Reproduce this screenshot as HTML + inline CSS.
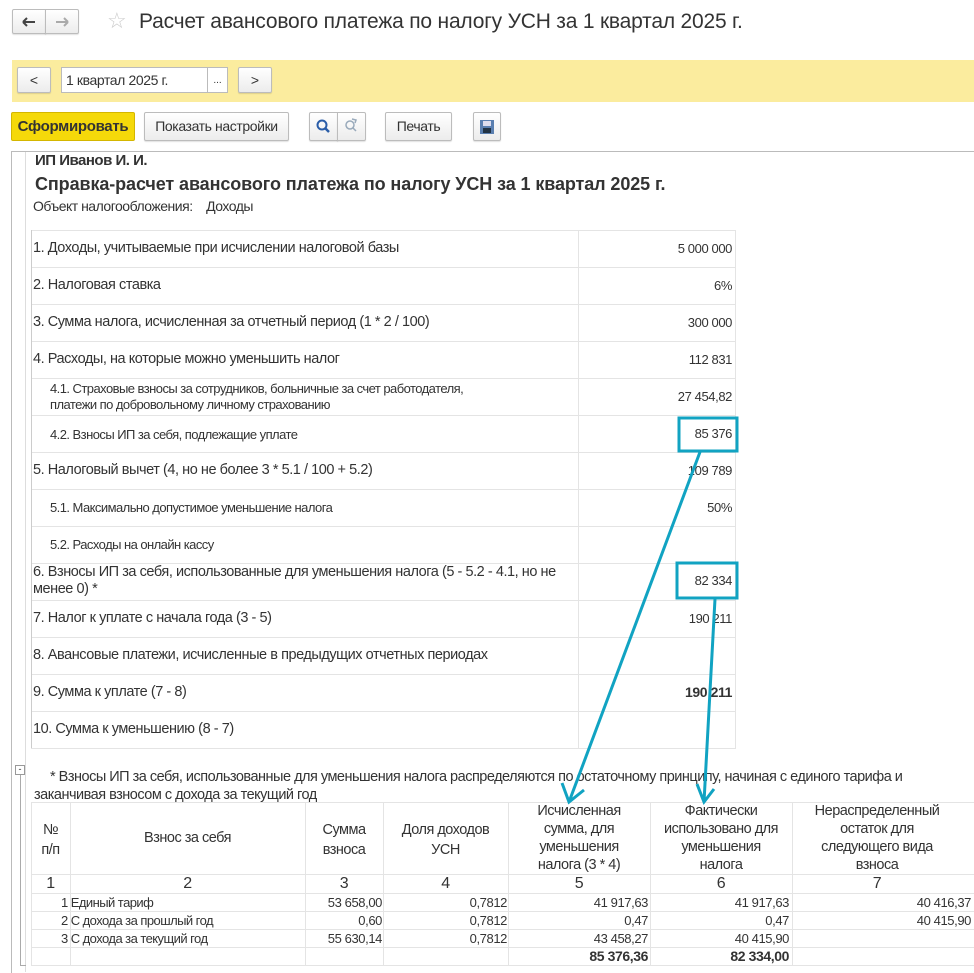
<!DOCTYPE html>
<html><head><meta charset="utf-8"><style>
*{margin:0;padding:0;box-sizing:border-box}
body{width:974px;height:973px;background:#fff;font-family:"Liberation Sans",sans-serif;color:#333;position:relative;overflow:hidden}
.a{position:absolute;white-space:nowrap}
.btn{position:absolute;border:1px solid #bcbcbc;border-radius:2px;background:linear-gradient(#fff,#ececec);font-size:14px;color:#333;text-align:center;box-shadow:0 1px 1px rgba(0,0,0,.12)}
.c{letter-spacing:-0.4px}
.hl{position:absolute;height:1px;background:#e4e4e4}
.vl{position:absolute;width:1px;background:#e4e4e4}
.r{position:absolute;font-size:14.5px;letter-spacing:-0.45px;white-space:nowrap}
.n{position:absolute;font-size:13px;letter-spacing:-0.4px;text-align:right;white-space:nowrap}
.t{position:absolute;font-size:13px;letter-spacing:-0.55px;white-space:nowrap}
.h{position:absolute;font-size:14.5px;letter-spacing:-0.5px;text-align:center;line-height:18px}
</style></head><body>
<div class="btn" style="left:12px;top:9px;width:34px;height:25px;border-radius:2px 0 0 2px"><svg width="32" height="23"><path d="M10 12h12M10 12l4-4M10 12l4 4" stroke="#444" stroke-width="2" fill="none"/></svg></div>
<div class="btn" style="left:45px;top:9px;width:34px;height:25px;border-radius:0 2px 2px 0"><svg width="32" height="23"><path d="M10 12h12M22 12l-4-4M22 12l-4 4" stroke="#aaa" stroke-width="2" fill="none"/></svg></div>
<div class="a" style="left:107px;top:8px;font-size:22px;color:#ccc">☆</div>
<div class="a" style="left:139px;top:10px;font-size:21px;color:#333;letter-spacing:-0.2px">Расчет авансового платежа по налогу УСН за 1 квартал 2025 г.</div>
<div class="a" style="left:12px;top:60px;width:962px;height:42px;background:#fbec9e"></div>
<div class="btn" style="left:17px;top:67px;width:34px;height:26px;line-height:24px">&lt;</div>
<div class="a" style="left:61px;top:67px;width:167px;height:26px;border:1px solid #bbb;background:#fff;font-size:14px;padding:4px 0 0 4px"><span class="c">1 квартал 2025 г.</span></div>
<div class="a" style="left:207px;top:67px;width:21px;height:26px;border:1px solid #bbb;background:#fff;font-size:10px;text-align:center;line-height:26px">...</div>
<div class="btn" style="left:238px;top:67px;width:34px;height:26px;line-height:24px">&gt;</div>
<div class="a" style="left:11px;top:112px;width:124px;height:29px;background:#f5d90a;border:1px solid #d4b600;border-radius:2px;font-size:15px;font-weight:bold;color:#333;text-align:center;line-height:27px;letter-spacing:-0.3px">Сформировать</div>
<div class="btn" style="left:144px;top:112px;width:145px;height:29px;line-height:27px"><span class="c">Показать настройки</span></div>
<div class="btn" style="left:309px;top:112px;width:29px;height:29px;border-radius:2px 0 0 2px"><svg width="27" height="27"><circle cx="12" cy="12" r="4.5" fill="none" stroke="#2a5da8" stroke-width="2"/><path d="M15 15l4 4" stroke="#2a5da8" stroke-width="2.5"/></svg></div>
<div class="btn" style="left:337px;top:112px;width:29px;height:29px;border-radius:0 2px 2px 0"><svg width="27" height="27"><circle cx="12" cy="12" r="4" fill="none" stroke="#9ab" stroke-width="1.5"/><path d="M15 15l3 3M14 6l4 1-1 3" stroke="#9ab" stroke-width="1.5" fill="none"/></svg></div>
<div class="btn" style="left:385px;top:112px;width:67px;height:29px;line-height:27px"><span class="c">Печать</span></div>
<div class="btn" style="left:473px;top:112px;width:28px;height:29px"><svg width="26" height="27"><rect x="6" y="7" width="14" height="14" fill="#5a7fb0"/><rect x="9" y="8" width="8" height="5" fill="#dde"/><rect x="9" y="15" width="8" height="5" fill="#234"/></svg></div>
<div class="a" style="left:11px;top:151px;width:963px;height:1px;background:#bbb"></div>
<div class="a" style="left:11px;top:151px;width:1px;height:822px;background:#bbb"></div>
<div class="a" style="left:25px;top:152px;width:1px;height:820px;background:#ddd"></div>
<div class="a" style="left:15px;top:765px;width:10px;height:10px;border:1px solid #999;background:#fff;font-size:9px;line-height:7px;text-align:center">-</div>
<div class="a" style="left:20px;top:775px;width:1px;height:190px;background:#aaa"></div>
<div class="a" style="left:20px;top:965px;width:6px;height:1px;background:#aaa"></div>

<div class="a" style="left:35px;top:152px;font-size:15px;font-weight:bold;letter-spacing:-0.5px">ИП Иванов И. И.</div>
<div class="a" style="left:35px;top:174px;font-size:18px;font-weight:bold;letter-spacing:-0.1px">Справка-расчет авансового платежа по налогу УСН за 1 квартал 2025 г.</div>
<div class="a" style="left:33px;top:198px;font-size:14px;letter-spacing:-0.5px">Объект налогообложения:&nbsp;&nbsp;&nbsp;&nbsp;Доходы</div>

<div class="hl" style="left:31px;top:230px;width:705px"></div>
<div class="hl" style="left:31px;top:267px;width:705px"></div>
<div class="hl" style="left:31px;top:304px;width:705px"></div>
<div class="hl" style="left:31px;top:341px;width:705px"></div>
<div class="hl" style="left:31px;top:378px;width:705px"></div>
<div class="hl" style="left:31px;top:415px;width:705px"></div>
<div class="hl" style="left:31px;top:452px;width:705px"></div>
<div class="hl" style="left:31px;top:489px;width:705px"></div>
<div class="hl" style="left:31px;top:526px;width:705px"></div>
<div class="hl" style="left:31px;top:563px;width:705px"></div>
<div class="hl" style="left:31px;top:600px;width:705px"></div>
<div class="hl" style="left:31px;top:637px;width:705px"></div>
<div class="hl" style="left:31px;top:674px;width:705px"></div>
<div class="hl" style="left:31px;top:711px;width:705px"></div>
<div class="hl" style="left:31px;top:748px;width:705px"></div>
<div class="vl" style="left:31px;top:230px;height:518px;background:#ccc"></div>
<div class="vl" style="left:578px;top:230px;height:518px"></div>
<div class="vl" style="left:735px;top:230px;height:518px"></div>

<div class="r" style="left:33px;top:240px">1. Доходы, учитываемые при исчислении налоговой базы</div>
<div class="r" style="left:33px;top:277px">2. Налоговая ставка</div>
<div class="r" style="left:33px;top:314px">3. Сумма налога, исчисленная за отчетный период (1 * 2 / 100)</div>
<div class="r" style="left:33px;top:351px">4. Расходы, на которые можно уменьшить налог</div>
<div class="t" style="left:50px;top:381px;line-height:16px">4.1. Страховые взносы за сотрудников, больничные за счет работодателя,<br>платежи по добровольному личному страхованию</div>
<div class="t" style="left:50px;top:427px">4.2. Взносы ИП за себя, подлежащие уплате</div>
<div class="r" style="left:33px;top:462px">5. Налоговый вычет (4, но не более 3 * 5.1 / 100 + 5.2)</div>
<div class="t" style="left:50px;top:500px">5.1. Максимально допустимое уменьшение налога</div>
<div class="t" style="left:50px;top:537px">5.2. Расходы на онлайн кассу</div>
<div class="r" style="left:33px;top:564px;line-height:17px">6. Взносы ИП за себя, использованные для уменьшения налога (5 - 5.2 - 4.1, но не<br>менее 0) *</div>
<div class="r" style="left:33px;top:610px">7. Налог к уплате с начала года (3 - 5)</div>
<div class="r" style="left:33px;top:647px">8. Авансовые платежи, исчисленные в предыдущих отчетных периодах</div>
<div class="r" style="left:33px;top:684px">9. Сумма к уплате (7 - 8)</div>
<div class="r" style="left:33px;top:721px">10. Сумма к уменьшению (8 - 7)</div>

<div class="n" style="right:242px;top:241px">5 000 000</div>
<div class="n" style="right:242px;top:278px">6%</div>
<div class="n" style="right:242px;top:315px">300 000</div>
<div class="n" style="right:242px;top:352px">112 831</div>
<div class="n" style="right:242px;top:389px">27 454,82</div>
<div class="n" style="right:242px;top:426px">85 376</div>
<div class="n" style="right:242px;top:463px">109 789</div>
<div class="n" style="right:242px;top:500px">50%</div>
<div class="n" style="right:242px;top:573px">82 334</div>
<div class="n" style="right:242px;top:611px">190 211</div>
<div class="n" style="right:242px;top:684px;font-size:14px;font-weight:bold">190 211</div>

<div class="t" style="left:50px;top:768px;font-size:14.5px;line-height:18px;letter-spacing:-0.5px">* Взносы ИП за себя, использованные для уменьшения налога распределяются по остаточному принципу, начиная с единого тарифа и<br><span style="margin-left:-16px">заканчивая взносом с дохода за текущий год</span></div>

<div class="hl" style="left:31px;top:802px;width:943px"></div>
<div class="hl" style="left:31px;top:874px;width:943px"></div>
<div class="hl" style="left:31px;top:893px;width:943px"></div>
<div class="hl" style="left:31px;top:911px;width:943px"></div>
<div class="hl" style="left:31px;top:929px;width:943px"></div>
<div class="hl" style="left:31px;top:947px;width:943px"></div>
<div class="hl" style="left:31px;top:965px;width:943px"></div>
<div class="vl" style="left:31px;top:802px;height:163px"></div>
<div class="vl" style="left:70px;top:802px;height:163px"></div>
<div class="vl" style="left:305px;top:802px;height:163px"></div>
<div class="vl" style="left:383px;top:802px;height:163px"></div>
<div class="vl" style="left:508px;top:802px;height:163px"></div>
<div class="vl" style="left:650px;top:802px;height:163px"></div>
<div class="vl" style="left:792px;top:802px;height:163px"></div>

<div class="h" style="left:31px;top:820px;width:39px;line-height:20px">№<br>п/п</div>
<div class="h" style="left:70px;top:829px;width:235px">Взнос за себя</div>
<div class="h" style="left:305px;top:820px;width:78px;line-height:20px">Сумма<br>взноса</div>
<div class="h" style="left:383px;top:820px;width:125px;line-height:20px">Доля доходов<br>УСН</div>
<div class="h" style="left:508px;top:802px;width:142px">Исчисленная<br>сумма, для<br>уменьшения<br>налога (3 * 4)</div>
<div class="h" style="left:650px;top:802px;width:142px">Фактически<br>использовано для<br>уменьшения<br>налога</div>
<div class="h" style="left:792px;top:802px;width:170px">Нераспределенный<br>остаток для<br>следующего вида<br>взноса</div>
<div class="h" style="left:31px;top:875px;width:39px;font-size:16px">1</div>
<div class="h" style="left:70px;top:875px;width:235px;font-size:16px">2</div>
<div class="h" style="left:305px;top:875px;width:78px;font-size:16px">3</div>
<div class="h" style="left:383px;top:875px;width:125px;font-size:16px">4</div>
<div class="h" style="left:508px;top:875px;width:142px;font-size:16px">5</div>
<div class="h" style="left:650px;top:875px;width:142px;font-size:16px">6</div>
<div class="h" style="left:792px;top:875px;width:170px;font-size:16px">7</div>

<div class="t" style="left:61px;top:895px">1 Единый тариф</div>
<div class="t" style="left:61px;top:913px">2 С дохода за прошлый год</div>
<div class="t" style="left:61px;top:931px">3 С дохода за текущий год</div>
<div class="n" style="right:592px;top:895px">53 658,00</div>
<div class="n" style="right:592px;top:913px">0,60</div>
<div class="n" style="right:592px;top:931px">55 630,14</div>
<div class="n" style="right:467px;top:895px">0,7812</div>
<div class="n" style="right:467px;top:913px">0,7812</div>
<div class="n" style="right:467px;top:931px">0,7812</div>
<div class="n" style="right:326px;top:895px">41 917,63</div>
<div class="n" style="right:326px;top:913px">0,47</div>
<div class="n" style="right:326px;top:931px">43 458,27</div>
<div class="n" style="right:326px;top:948px;font-size:14px;font-weight:bold">85 376,36</div>
<div class="n" style="right:185px;top:895px">41 917,63</div>
<div class="n" style="right:185px;top:913px">0,47</div>
<div class="n" style="right:185px;top:931px">40 415,90</div>
<div class="n" style="right:185px;top:948px;font-size:14px;font-weight:bold">82 334,00</div>
<div class="n" style="right:3px;top:895px">40 416,37</div>
<div class="n" style="right:3px;top:913px">40 415,90</div>

<svg class="a" style="left:0;top:0" width="974" height="973">
<g stroke="#11a3c2" fill="none" stroke-width="3">
<rect x="679" y="418" width="58" height="33"/>
<rect x="677" y="563" width="60" height="35"/>
<path d="M700 452L569 802M562 783L569 802L584 790"/>
<path d="M715 599L704 802M697 784L704 802L714 789"/>
</g>
</svg>
</body></html>
